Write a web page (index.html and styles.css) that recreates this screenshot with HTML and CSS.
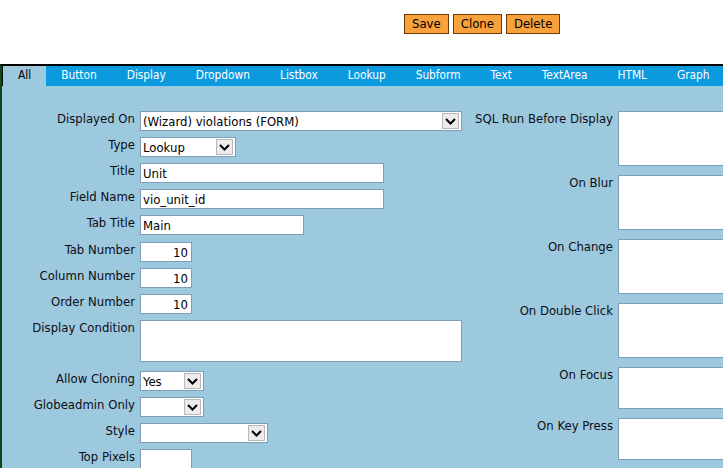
FILE: index.html
```html
<!DOCTYPE html>
<html lang="en">
<head>
	<meta charset="UTF-8">
	<title>Field Properties</title>
	<link rel="stylesheet" href="styles.css">
</head>
<body>
	<div class="toolbar">
		<button class="btn">Save</button>
		<button class="btn">Clone</button>
		<button class="btn">Delete</button>
	</div>
	<div class="panel">
		<ul class="tabs">
			<li class="on">All</li>
			<li>Button</li>
			<li>Display</li>
			<li>Dropdown</li>
			<li>Listbox</li>
			<li>Lookup</li>
			<li>Subform</li>
			<li>Text</li>
			<li>TextArea</li>
			<li>HTML</li>
			<li>Graph</li>
		</ul>
		<div class="content">
			<div class="form left">
				<label>Displayed On</label>
				<span class="sel w-full"><select><option>(Wizard) violations (FORM)</option></select><i class="arrow"><svg width="11" height="7" viewBox="0 0 11 7"><path d="M1 1l4.5 4.5L10 1" fill="none" stroke="#000" stroke-width="2"/></svg></i></span>

				<label>Type</label>
				<span class="sel w-type"><select><option>Lookup</option></select><i class="arrow"><svg width="11" height="7" viewBox="0 0 11 7"><path d="M1 1l4.5 4.5L10 1" fill="none" stroke="#000" stroke-width="2"/></svg></i></span>

				<label>Title</label>
				<input type="text" class="w-mid" value="Unit">

				<label>Field Name</label>
				<input type="text" class="w-mid" value="vio_unit_id">

				<label>Tab Title</label>
				<input type="text" class="w-tab" value="Main">

				<label>Tab Number</label>
				<input type="text" class="num" value="10">

				<label>Column Number</label>
				<input type="text" class="num" value="10">

				<label>Order Number</label>
				<input type="text" class="num" value="10">

				<label>Display Condition</label>
				<textarea class="w-full short"></textarea>

				<label>Allow Cloning</label>
				<span class="sel w-small"><select><option>Yes</option></select><i class="arrow"><svg width="11" height="7" viewBox="0 0 11 7"><path d="M1 1l4.5 4.5L10 1" fill="none" stroke="#000" stroke-width="2"/></svg></i></span>

				<label>Globeadmin Only</label>
				<span class="sel w-small"><select><option></option></select><i class="arrow"><svg width="11" height="7" viewBox="0 0 11 7"><path d="M1 1l4.5 4.5L10 1" fill="none" stroke="#000" stroke-width="2"/></svg></i></span>

				<label>Style</label>
				<span class="sel w-style"><select><option></option></select><i class="arrow"><svg width="11" height="7" viewBox="0 0 11 7"><path d="M1 1l4.5 4.5L10 1" fill="none" stroke="#000" stroke-width="2"/></svg></i></span>

				<label>Top Pixels</label>
				<input type="text" class="num" value="">
			</div>
			<div class="form right">
				<label>SQL Run Before Display</label>
				<textarea class="tall"></textarea>

				<label>On Blur</label>
				<textarea class="tall"></textarea>

				<label>On Change</label>
				<textarea class="tall"></textarea>

				<label>On Double Click</label>
				<textarea class="tall"></textarea>

				<label>On Focus</label>
				<textarea class="short"></textarea>

				<label>On Key Press</label>
				<textarea class="short"></textarea>
			</div>
		</div>
	</div>
</body>
</html>
```

FILE: styles.css
```css
html,body{margin: 0;padding: 0;background: #fff;overflow: hidden;}
body{font: 13px/16px "DejaVu Sans Condensed","DejaVu Sans",sans-serif;font-stretch: condensed;color: #000;}
ul,li{margin: 0;padding: 0;list-style: none;}

.toolbar{display: flex;gap: 4px;padding: 14px 0 0 404px;height: 20px;margin-bottom: 30px;}
.btn{height: 20px;padding: 0 7px;margin: 0;background: #f9a13b;border: 1px solid #6a3c07;font-size: 13px;line-height: 18px;font-family: inherit;color: #000;cursor: pointer;}

.panel{border-top: 2px solid #000;border-left: 2px solid #0b4a1d;background: #9dc9df;height: 420px;overflow: hidden;}
.tabs{display: flex;height: 20px;background: #0b9ade;margin-left: -2px;border-left: 3px solid #000;}
.tabs li{padding: 0 15px;font-size: 11.8px;line-height: 19px;color: #fff;white-space: nowrap;}
.tabs li.on{background: #9dc9df;color: #000;}

.content{display: flex;align-items: flex-start;gap: 4px;padding-top: 25px;}
.form{display: grid;column-gap: 5px;row-gap: 6px;align-items: start;}
.form label{text-align: right;white-space: nowrap;color: #0d0d14;}
.left{grid-template-columns: 133px 322px;}
.right{grid-template-columns: 147px 320px;}

input,textarea,select{font: 13px "DejaVu Sans Condensed","DejaVu Sans",sans-serif;font-stretch: condensed;color: #000;}
input{box-sizing: border-box;height: 20px;border: 1px solid #7f9db9;background: #fff;padding: 0 2px;margin: 0;}
textarea{box-sizing: border-box;border: 1px solid #7f9db9;background: #fff;margin: 0 0 3px;resize: none;display: block;}
.right textarea{width: 320px;}
.w-full{width: 322px;}
.w-mid{width: 244px;}
.w-tab{width: 164px;margin-bottom: 1px;}
.num{width: 52px;text-align: right;padding-right: 3px;}
.short{height: 42px;}
.tall{height: 55px;}

.sel{box-sizing: border-box;display: flex;height: 20px;border: 1px solid #7f9db9;background: #fff;padding: 1px 2px 1px 0;}
.sel select{flex: 1;min-width: 0;appearance: none;-webkit-appearance: none;border: none;background: transparent;padding: 0 2px;margin: 0;outline: none;}
.arrow{box-sizing: border-box;width: 17px;display: flex;align-items: center;justify-content: center;background: #ececec;border: 1px solid #b8b8b8;}
.w-type{width: 96px;}
.w-small{width: 64px;}
.w-style{width: 128px;}
```
